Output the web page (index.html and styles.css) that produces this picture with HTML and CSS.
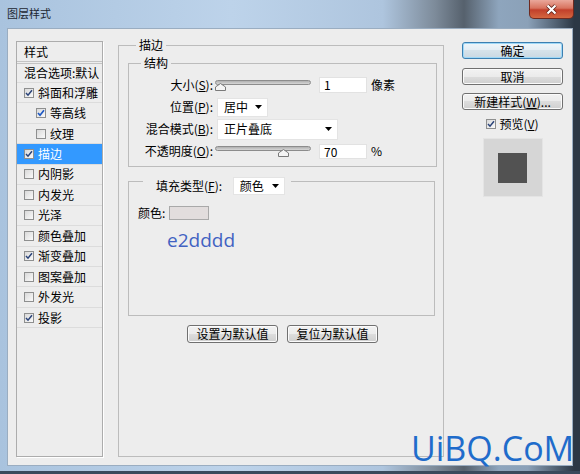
FILE: index.html
```html
<!DOCTYPE html>
<html lang="zh-CN">

<head>
    <meta charset="UTF-8">
    <meta name="viewport" content="width=device-width, initial-scale=1.0">
    <title>图层样式</title>
    <link rel="stylesheet" href="styles.css">
</head>

<body>
    <div class="window">
        <div class="titlebar">
            <span class="titlebar__text">图层样式</span>
            <span class="titlebar__close">
                <svg width="13" height="11" viewBox="0 0 13 11"><path d="M2.5 1.5l8 8M10.5 1.5l-8 8" stroke="#5a1d14" stroke-width="3.8"/><path d="M2.5 1.5l8 8M10.5 1.5l-8 8" stroke="#fff" stroke-width="2.2"/></svg>
            </span>
        </div>

        <div class="client">
            <!-- style list -->
            <ul class="styles">
                <li class="styles__head">样式</li>
                <li class="styles__blend">混合选项:默认</li>
                <li><span class="check"><svg width="8" height="8" viewBox="0 0 8 8"><path d="M1 4l2 2.2L7 1.2" fill="none" stroke="#2a4379" stroke-width="1.5"/></svg></span>斜面和浮雕</li>
                <li class="is-sub"><span class="check"><svg width="8" height="8" viewBox="0 0 8 8"><path d="M1 4l2 2.2L7 1.2" fill="none" stroke="#1d58c4" stroke-width="1.7"/></svg></span>等高线</li>
                <li class="is-sub"><span class="check"></span>纹理</li>
                <li class="is-active"><span class="check"><svg width="8" height="8" viewBox="0 0 8 8"><path d="M1 4l2 2.2L7 1.2" fill="none" stroke="#2a4379" stroke-width="1.5"/></svg></span>描边</li>
                <li><span class="check"></span>内阴影</li>
                <li><span class="check"></span>内发光</li>
                <li><span class="check"></span>光泽</li>
                <li><span class="check"></span>颜色叠加</li>
                <li><span class="check"><svg width="8" height="8" viewBox="0 0 8 8"><path d="M1 4l2 2.2L7 1.2" fill="none" stroke="#2a4379" stroke-width="1.5"/></svg></span>渐变叠加</li>
                <li><span class="check"></span>图案叠加</li>
                <li><span class="check"></span>外发光</li>
                <li><span class="check"><svg width="8" height="8" viewBox="0 0 8 8"><path d="M1 4l2 2.2L7 1.2" fill="none" stroke="#2a4379" stroke-width="1.5"/></svg></span>投影</li>
            </ul>

            <!-- stroke settings -->
            <fieldset class="group group--main">
                <legend>描边</legend>

                <fieldset class="group group--struct">
                    <legend>结构</legend>
                    <div class="field">
                        <span class="field__label">大小(<u>S</u>):</span>
                        <div class="slider">
                            <div class="slider__track"></div>
                            <svg class="slider__thumb" style="left: 0px" width="11" height="8" viewBox="0 0 11 8"><path d="M5.5.5L10.5 4v3.5H.5V4z" fill="#f4f4f4" stroke="#7a7a7a"/></svg>
                        </div>
                        <span class="input">1</span>
                        <span class="unit">像素</span>
                    </div>
                    <div class="field">
                        <span class="field__label">位置(<u>P</u>):</span>
                        <span class="select select--pos">居中<svg width="7" height="4" viewBox="0 0 7 4"><path d="M0 0h7L3.5 4z"/></svg></span>
                    </div>
                    <div class="field">
                        <span class="field__label">混合模式(<u>B</u>):</span>
                        <span class="select select--blend">正片叠底<svg width="7" height="4" viewBox="0 0 7 4"><path d="M0 0h7L3.5 4z"/></svg></span>
                    </div>
                    <div class="field">
                        <span class="field__label">不透明度(<u>O</u>):</span>
                        <div class="slider">
                            <div class="slider__track"></div>
                            <svg class="slider__thumb" style="left: 63px" width="11" height="8" viewBox="0 0 11 8"><path d="M5.5.5L10.5 4v3.5H.5V4z" fill="#f4f4f4" stroke="#7a7a7a"/></svg>
                        </div>
                        <span class="input input--short">70</span>
                        <span class="unit">%</span>
                    </div>
                </fieldset>

                <fieldset class="group group--fill">
                    <legend>
                        <span class="fill-label">填充类型(<u>F</u>):</span>
                        <span class="select select--fill">颜色<svg width="7" height="4" viewBox="0 0 7 4"><path d="M0 0h7L3.5 4z"/></svg></span>
                    </legend>
                    <div class="fill-body">
                        <div class="color-row">颜色:<span class="swatch"></span></div>
                        <div class="hex">e2dddd</div>
                    </div>
                </fieldset>

                <div class="defaults">
                    <button class="btn btn--wide">设置为默认值</button>
                    <button class="btn btn--wide">复位为默认值</button>
                </div>
            </fieldset>

            <!-- dialog actions -->
            <div class="actions">
                <button class="btn btn--default">确定</button>
                <button class="btn btn--cancel">取消</button>
                <button class="btn btn--new">新建样式(<u>W</u>)...</button>
                <div class="preview-toggle">
                    <span class="check"><svg width="8" height="8" viewBox="0 0 8 8"><path d="M1 4l2 2.2L7 1.2" fill="none" stroke="#2a4379" stroke-width="1.5"/></svg></span>预览(<u>V</u>)
                </div>
                <div class="preview">
                    <div class="preview__swatch"></div>
                </div>
            </div>
        </div>

        <div class="watermark">UiBQ.CoM</div>
    </div>
</body>

</html>
```

FILE: styles.css
```css
body {
    margin: 0;
    background: #fff;
    color: #000;
    font-family: "Noto Sans CJK SC", "Open Sans", sans-serif;
    font-size: 12px;
    line-height: 16px;
}

u {
    text-decoration-thickness: 1px;
    text-underline-offset: 1px;
}

.window {
    position: relative;
    display: flex;
    flex-direction: column;
    width: 580px;
    height: 474px;
    box-sizing: border-box;
    border-bottom: 3px solid #3a4a5c;
    background: linear-gradient(to right, #a9c3de 0%, #bdd3ea 40%, #aec5de 66%, #7d8b9a 75%, #56616d 80%, #8ea5bd 86%, #8ba1b8 91%, #2c3845 99%);
}

/* title bar */

.titlebar {
    display: flex;
    align-items: flex-start;
    height: 28px;
    padding-left: 7px;
}

.titlebar__text {
    margin-top: 6px;
    font-size: 11px;
    line-height: 14px;
    color: #1c2630;
}

.titlebar__close {
    display: flex;
    align-items: center;
    justify-content: center;
    width: 45px;
    height: 19px;
    margin-left: auto;
    margin-right: 6px;
    box-sizing: border-box;
    border: 1px solid #6e2a20;
    border-top: 0;
    border-radius: 0 0 5px 5px;
    background: linear-gradient(#eaa89b, #d8735f 45%, #c2402b 55%, #d4663f);
}

/* client area */

.client {
    display: flex;
    align-items: flex-start;
    flex: 1;
    margin: 0 7px 5px;
    padding: 9px 0 0 8px;
    background: #ededed;
    border: 1px solid #9aadc1;
}

/* style list */

.styles {
    list-style: none;
    width: 87px;
    height: 416px;
    margin: 3px 0 0;
    padding: 0;
    box-sizing: border-box;
    border: 1px solid #acacac;
    box-shadow: 1px 1px 0 #fff;
}

.styles li {
    display: flex;
    align-items: center;
    height: 20.45px;
    box-sizing: border-box;
    padding-left: 7px;
    border-bottom: 1px solid #dcdcdc;
    white-space: nowrap;
}

.styles li.styles__head {
    height: 22px;
    border-bottom: 3px double #c4c4c4;
}

.styles li.styles__blend {
    height: 19px;
}

.styles li.is-sub {
    padding-left: 19px;
}

.styles li.is-active {
    background: #3399ff;
    color: #fff;
}

.check {
    display: inline-flex;
    align-items: center;
    justify-content: center;
    flex: none;
    width: 10px;
    height: 10px;
    margin-right: 4px;
    box-sizing: border-box;
    border: 1px solid #8e8f8f;
    background: linear-gradient(135deg, #d9d9d9, #fafafa);
}

/* group boxes */

.group {
    min-inline-size: 0;
    margin: 0;
    padding: 0;
    border: 1px solid #bcbcbc;
}

.group legend {
    padding: 0 3px;
    line-height: 14px;
}

.group--main {
    width: 326px;
    height: 419px;
    margin-left: 15px;
    padding: 0 6px 0 9px;
    box-sizing: border-box;
}

.group--main > legend {
    margin-left: 8px;
}

.group--struct {
    margin-top: 4px;
    padding: 4px 0;
}

.group--struct > legend {
    margin-left: 12px;
}

.field {
    display: flex;
    align-items: center;
    height: 22px;
}

.field__label {
    width: 84px;
    margin-right: 3px;
    text-align: right;
    white-space: nowrap;
}

.slider {
    position: relative;
    width: 96px;
    height: 11px;
    margin-left: -1px;
}

.slider__track {
    height: 3px;
    border: 1px solid #8c8c8c;
    border-radius: 3px;
    background: linear-gradient(#b0b0b0, #d6d6d6);
}

.slider__thumb {
    position: absolute;
    top: 3px;
}

.input {
    width: 48px;
    height: 16px;
    margin-left: 8px;
    padding-left: 4px;
    box-sizing: border-box;
    background: #fff;
    border: 1px solid #e2e2e2;
    line-height: 14px;
}

.input--short {
    height: 15px;
}

.unit {
    margin-left: 4px;
}

.select {
    display: inline-flex;
    align-items: center;
    justify-content: space-between;
    height: 19px;
    margin-left: 1px;
    padding: 0 5px 0 6px;
    box-sizing: border-box;
    background: #fff;
    border: 1px solid #e4e4e4;
}

.select--pos {
    width: 51px;
}

.select--blend {
    width: 121px;
    height: 21px;
}

.group--fill {
    margin: 2px 2px 0 0;
    padding: 0 0 0 9px;
}

.group--fill > legend {
    margin-left: 5px;
    padding: 6px 6px 0 13px;
    line-height: 18px;
}

.fill-label {
    vertical-align: middle;
}

.select--fill {
    width: 52px;
    height: 18px;
    margin-left: 8px;
    vertical-align: middle;
}

.fill-body {
    height: 109px;
}

.color-row {
    display: flex;
    align-items: center;
    height: 15px;
    margin-top: 11px;
}

.swatch {
    width: 40px;
    height: 14px;
    margin-left: 4px;
    box-sizing: border-box;
    border: 1px solid #a9a9a9;
    background: #e2dddd;
}

.hex {
    margin: 8px 0 0 29px;
    color: #4262c2;
    font-family: "Open Sans", sans-serif;
    font-size: 19px;
    line-height: 22px;
}

.defaults {
    display: flex;
    justify-content: center;
    gap: 9px;
    margin-top: 9px;
}

/* buttons */

.btn {
    width: 101px;
    height: 17px;
    margin: 0;
    padding: 0;
    box-sizing: border-box;
    border: 1px solid #707070;
    border-radius: 3px;
    background: linear-gradient(#f2f2f2 0%, #ebebeb 50%, #dddddd 50%, #cfcfcf 100%);
    box-shadow: inset 0 0 0 1px #fbfbfb;
    color: #000;
    font-family: inherit;
    font-size: 12px;
    line-height: 15px;
    white-space: nowrap;
}

.btn--wide {
    width: 91px;
    height: 18px;
}

.btn--default {
    margin-top: 4px;
    border-color: #3c7fb1;
    background: linear-gradient(#f0f6fa 0%, #e3edf4 50%, #d6e2ea 50%, #cad8e2 100%);
    box-shadow: inset 0 0 0 1px #9fd8f7;
}

.btn--cancel {
    margin-top: 9px;
}

.btn--new {
    margin-top: 8px;
}

/* right column */

.actions {
    display: flex;
    flex-direction: column;
    align-items: center;
    width: 101px;
    margin-left: 18px;
}

.preview-toggle {
    display: flex;
    align-items: center;
    height: 14px;
    margin-top: 7px;
}

.preview-toggle .check {
    margin-right: 3px;
}

.preview {
    display: flex;
    align-items: center;
    justify-content: center;
    width: 60px;
    height: 59px;
    margin-top: 7px;
    box-sizing: border-box;
    border: 1px solid #e4e4e4;
    background: #d6d6d6;
}

.preview__swatch {
    width: 29px;
    height: 30px;
    background: #525252;
}

.watermark {
    position: absolute;
    left: 411px;
    top: 431px;
    color: #1f6ccb;
    font-family: "Open Sans", sans-serif;
    font-size: 34px;
    line-height: 34px;
}
```
